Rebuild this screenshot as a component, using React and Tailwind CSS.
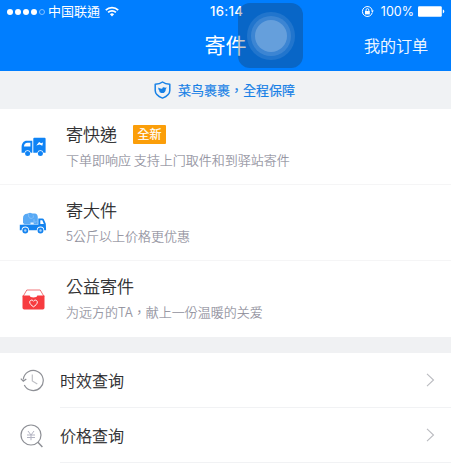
import React from "react";

function WifiIcon() {
  return (
    <svg className="ml-[5px] h-[11px] w-[14px]" viewBox="0 0 14 11" fill="none" stroke="#fff" strokeWidth="1.7">
      <path d="M0.8 4.1a8.8 8.8 0 0 1 12.4 0" />
      <path d="M3.1 6.4a5.5 5.5 0 0 1 7.8 0" />
      <path d="M7 10.5 4.9 8.3a3 3 0 0 1 4.2 0z" fill="#fff" stroke="none" />
    </svg>
  );
}

function RotationLockIcon() {
  return (
    <svg className="h-[13px] w-[13px]" viewBox="0 0 13 13" fill="none" stroke="#fff">
      <path d="M11.3 7.5a5 5 0 1 1 0-2" strokeWidth="1" />
      <path d="M9.8 5.6h3l-1.4 2z" fill="#fff" stroke="none" />
      <rect x="4" y="6" width="4.8" height="3.4" fill="#fff" stroke="none" />
      <path d="M5 6V5a1.4 1.4 0 0 1 2.8 0v1" strokeWidth="0.9" />
    </svg>
  );
}

function BatteryIcon() {
  return (
    <svg className="ml-[4px] h-[11px] w-[27px]" viewBox="0 0 27 11" fill="#fff">
      <rect x="0" y="0.3" width="23.8" height="10.4" rx="1.2" />
      <path d="M24.8 3.6c2 .5 2 3.3 0 3.8z" />
    </svg>
  );
}

function ShieldIcon() {
  return (
    <svg className="h-[18px] w-[17px]" viewBox="0 0 17 18" fill="none">
      <path d="M8.500 1C6.500 2.600 4 3.200 1.200 3.200v6.200c0 3.600 3.200 6 7.300 7.700 4.100-1.700 7.300-4.100 7.300-7.700V3.200C13 3.200 10.500 2.600 8.500 1z" stroke="#1680e6" strokeWidth="1.500" strokeLinejoin="round" />
      <path d="M4.300 6.600c1.500 1 2.700 1.200 3.900 1.100.3-1.300 1.600-1.800 2.600-1l2-.2-1 1.400c.1 2.600-1.500 4.200-3.500 4.200-1.600 0-2.800-.7-3.300-1.800l1 .1C4.800 9.500 4.200 8.300 4.300 6.600z" fill="#1680e6" />
    </svg>
  );
}

function VanIcon() {
  return (
    <svg className="h-[20px] w-[25px]" viewBox="0 0 25 20">
      <path d="M6 3.800h5.300v11.900H9.700a3.200 3.200 0 0 0-6.200 0H.600V9.800C.800 6.500 2.400 3.800 6 3.800z" fill="#0f83f5" />
      <path d="M6.500 5.800h2.900v3.600H2.900c.4-2.200 1.500-3.600 3.600-3.600z" fill="#fff" />
      <path d="M13.300.8h10.300a1 1 0 0 1 1 1v13.900h-2.100a3.200 3.200 0 0 0-6.200 0h-4V1.800a1 1 0 0 1 1-1z" fill="#0f83f5" />
      <path d="m15.300 8.500 2.800-3.400 2 1.200 1.900-.7-.7 3.200-2.600-1.400z" fill="#fff" />
      <circle cx="6.600" cy="16.600" r="2.500" fill="#0f83f5" />
      <circle cx="19.400" cy="16.600" r="2.500" fill="#0f83f5" />
    </svg>
  );
}

function ElephantTruckIcon() {
  return (
    <svg className="h-[22px] w-[28px]" viewBox="0 0 28 22">
      <path d="M4 12.500V6.200C4 3.300 5.600 2 8 1.800L11 .700l2.500.8h2.700c1.800.3 2.600 1.800 2.600 3.800v7.200z" fill="#58a9f5" />
      <path d="M9.700 1.800c-.6 2.800.2 4.600 2.700 4.600 1.800 0 2.300-1.600 1.800-3M15 7.300v2.200c0 1.100 1.900 1.100 2.200-.1" stroke="#8fc5f9" strokeWidth=".8" fill="none" />
      <path d="M3.600 11.200h1.500v1.500H3.600zM11.500 10.600h3.200v1.800h-3.200z" fill="#e3f1fe" />
      <path d="M.8 12.800h18.500V6.400h4c.8 0 1.300.3 1.600 1l1.900 4.300.3 6.600h-1.900a3.700 3.700 0 0 0-7.400 0H10a3.700 3.700 0 0 0-7.400 0H.800z" fill="#1483ef" />
      <path d="M21.300 8.200h2l1.600 3.700h-3.600z" fill="#fff" />
      <circle cx="6.300" cy="18.500" r="2.100" fill="#a9d2fb" stroke="#1483ef" strokeWidth="1.700" />
      <circle cx="21.500" cy="18.500" r="2.100" fill="#a9d2fb" stroke="#1483ef" strokeWidth="1.700" />
    </svg>
  );
}

function CharityBoxIcon() {
  return (
    <svg className="h-[21px] w-[23px]" viewBox="0 0 23 21" fill="none">
      <path d="M1 7.500 4.800 1h13.400L22 7.500" stroke="#f0777a" strokeWidth="1" />
      <path d="M.5 6.500h7.200c.3 1.400 1.600 1.900 3.800 1.900s3.500-.5 3.800-1.900h7.200v12.300a1.700 1.700 0 0 1-1.700 1.700H2.200a1.700 1.700 0 0 1-1.700-1.700z" fill="#f73c40" />
      <path d="M11.500 17.800c-2.200-1.500-3.800-2.900-3.800-4.700 0-2.100 2.700-2.800 3.800-.8 1.100-2 3.800-1.300 3.800.8 0 1.800-1.600 3.200-3.800 4.700z" stroke="#fff" strokeWidth="1" />
    </svg>
  );
}

function HistoryIcon() {
  return (
    <svg className="h-[23px] w-[24px]" viewBox="0 0 24 23" fill="none">
      <path d="M3.300 10.500A10 10 0 1 1 4.300 16" stroke="#8e9096" strokeWidth="1.200" />
      <path d="m.8 9.600 2.500 2.500 3-2.100" stroke="#8e9096" strokeWidth="1.200" />
      <path d="M12.300 5.500v6.500l5 3" stroke="#bfc0c5" strokeWidth="1.200" />
    </svg>
  );
}

function PriceSearchIcon() {
  return (
    <svg className="h-[24px] w-[24px]" viewBox="0 0 24 24" fill="none" strokeWidth="1.200">
      <circle cx="11" cy="11" r="10" stroke="#8e9096" />
      <path d="m17.900 18.300 4.500 4.700" stroke="#8e9096" strokeWidth="1.500" />
      <path d="m8 7 3 4 3-4M7 11h8M7 13.500h8M11 11v5.200" stroke="#b2b3c1" strokeWidth="1" />
    </svg>
  );
}

function Chevron() {
  return (
    <svg className="mr-[16px] h-[14px] w-[9px]" viewBox="0 0 9 14" fill="none">
      <path d="m1 .800 6.500 6.200L1 13.200" stroke="#babbc0" strokeWidth="1.100" />
    </svg>
  );
}

function ServiceRow({ icon, title, detail, badge, last }) {
  return (
    <div className={last ? "flex h-[76px] shrink-0" : "flex h-[76px] shrink-0 border-b border-[#f5f5f6]"}>
      <div className="flex w-[66px] shrink-0 items-center justify-center pt-[1px]">{icon}</div>
      <div className="pt-[13px]">
        <div className="flex h-[24px] items-center">
          <span className="text-[17px] font-light leading-[24px] text-[#202022] [-webkit-text-stroke:0.25px_#202022]">{title}</span>
          {badge && (
            <span className="ml-[16px] mt-[1px] flex h-[19px] w-[33px] items-center justify-center rounded-[1px] bg-[#fb9e09] pb-[1px] text-[12px] leading-[18px] text-white [-webkit-text-stroke:0.2px_#fff]">
              {badge}
            </span>
          )}
        </div>
        <p className="mt-[4px] text-[13px] font-light leading-[20px] text-[#8d8d9a] [-webkit-text-stroke:0.15px_#8d8d9a]">{detail}</p>
      </div>
    </div>
  );
}

function QueryRow({ icon, title }) {
  return (
    <div className="flex h-[55px] shrink-0">
      <div className="flex w-[60px] shrink-0 items-center justify-center pl-[3px]">{icon}</div>
      <div className="flex flex-1 items-center justify-between border-b border-[#f1f2f4]">
        <span className="text-[16px] font-light text-[#202022] [-webkit-text-stroke:0.25px_#202022]">{title}</span>
        <Chevron />
      </div>
    </div>
  );
}

export default function App() {
  return (
    <div className="relative flex h-[463px] w-[451px] flex-col overflow-hidden bg-white font-['Noto_Sans_CJK_TC','Noto_Sans_CJK_SC',sans-serif]">
      <header className="h-[71px] shrink-0 bg-[#007eff] text-white">
        <div className="grid h-[23px] grid-cols-3 items-center">
          <div className="flex items-center pl-[7px]">
            <div className="flex gap-[2px]">
              <i className="h-[6px] w-[6px] rounded-full bg-white" />
              <i className="h-[6px] w-[6px] rounded-full bg-white" />
              <i className="h-[6px] w-[6px] rounded-full bg-white" />
              <i className="h-[6px] w-[6px] rounded-full bg-white" />
              <i className="h-[6px] w-[6px] rounded-full border border-[#80bfff]" />
            </div>
            <span className="-mt-[2px] ml-[3px] text-[13px] leading-[20px]">中国联通</span>
            <WifiIcon />
          </div>
          <span className="pl-[2px] text-center font-['Inter',sans-serif] text-[13px] font-medium tracking-[0.3px]">16:14</span>
          <div className="flex items-center justify-end pr-[6px]">
            <RotationLockIcon />
            <span className="ml-[7px] mt-[1px] font-['Inter',sans-serif] text-[12.500px] leading-[18px]">100%</span>
            <BatteryIcon />
          </div>
        </div>
        <div className="grid h-[44px] grid-cols-3 items-center">
          <h1 className="col-start-2 -mt-[2px] text-center text-[21px] leading-[30px]">寄件</h1>
          <span className="pr-[23px] text-right text-[16px] font-light leading-[24px] [-webkit-text-stroke:0.25px_#fff]">我的订单</span>
        </div>
      </header>

      <div className="absolute left-[238px] top-[3px] flex h-[65px] w-[65px] items-center justify-center rounded-[12px] bg-[#202020]/25">
        <div className="flex h-[48px] w-[48px] items-center justify-center rounded-full bg-white/10">
          <div className="flex h-[40px] w-[40px] items-center justify-center rounded-full bg-white/12">
            <div className="h-[32px] w-[32px] rounded-full bg-[#659fdc]" />
          </div>
        </div>
      </div>

      <div className="flex h-[38px] shrink-0 items-center justify-center bg-[#f0f2f4] pr-[2px] text-[#1680e6]">
        <ShieldIcon />
        <span className="ml-[7px] text-[13px] leading-[20px] [-webkit-text-stroke:0.2px_#1680e6]">菜鸟裹裹，全程保障</span>
      </div>

      <ServiceRow icon={<VanIcon />} title="寄快递" badge="全新" detail="下单即响应 支持上门取件和到驿站寄件" />
      <ServiceRow icon={<ElephantTruckIcon />} title="寄大件" detail="5公斤以上价格更优惠" />
      <ServiceRow icon={<CharityBoxIcon />} title="公益寄件" detail="为远方的TA，献上一份温暖的关爱" last />
      <div className="h-[16px] shrink-0 bg-[#f0f1f3]" />
      <QueryRow icon={<HistoryIcon />} title="时效查询" />
      <QueryRow icon={<PriceSearchIcon />} title="价格查询" />
    </div>
  );
}
